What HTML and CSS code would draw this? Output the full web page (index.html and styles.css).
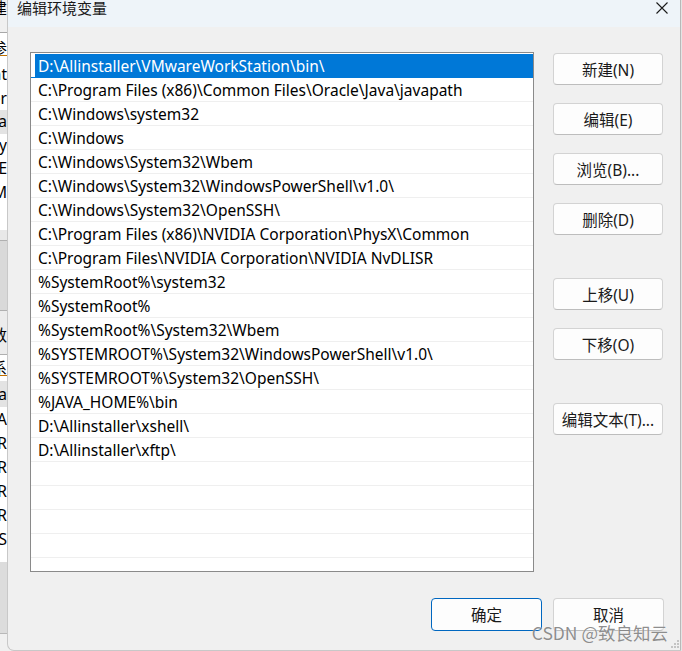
FILE: index.html
```html
<!DOCTYPE html>
<html lang="zh-CN">
<head>
    <meta charset="UTF-8">
    <meta name="viewport" content="width=device-width, initial-scale=1.0">
    <title>编辑环境变量</title>
    <link rel="stylesheet" href="styles.css">
</head>
<body>
    <div class="screen">
        <!-- window behind the dialog, only a sliver visible -->
        <div class="behind">
            <div class="bh-head"><span>建</span></div>
            <div class="bh-list">
                <div class="bh-row bh-first"><span class="ul">参</span></div>
                <div class="bh-row"><span>nt</span></div>
                <div class="bh-row"><span>er</span></div>
                <div class="bh-row bh-sel"><span>a</span></div>
                <div class="bh-row"><span>y</span></div>
                <div class="bh-row"><span>E</span></div>
                <div class="bh-row"><span>M</span></div>
            </div>
            <div class="bh-light"></div>
            <div class="bh-gray"></div>
            <div class="bh-head2"><span>数</span></div>
            <div class="bh-list2">
                <div class="bh-row2 bh-tall"><span class="ul">系</span></div>
                <div class="bh-row2 bh-tall bh-sel"><span>a</span></div>
                <div class="bh-row2"><span>A</span></div>
                <div class="bh-row2"><span>R</span></div>
                <div class="bh-row2"><span>R</span></div>
                <div class="bh-row2"><span>R</span></div>
                <div class="bh-row2"><span>R</span></div>
                <div class="bh-row2"><span>S</span></div>
            </div>
            <div class="bh-gray2"></div>
        </div>

        <div class="dialog">
            <div class="titlebar">
                <span class="title">编辑环境变量</span>
                <svg class="close" width="12" height="12" viewBox="0 0 12 12">
                    <path d="M0.5 0.5 L11.5 11.5 M11.5 0.5 L0.5 11.5" stroke="#1a1a1a" stroke-width="1.1" fill="none"/>
                </svg>
            </div>

            <div class="content">
                <div class="main">
                    <ul class="pathlist">
                        <li class="selected">D:\Allinstaller\VMwareWorkStation\bin\</li>
                        <li>C:\Program Files (x86)\Common Files\Oracle\Java\javapath</li>
                        <li>C:\Windows\system32</li>
                        <li>C:\Windows</li>
                        <li>C:\Windows\System32\Wbem</li>
                        <li>C:\Windows\System32\WindowsPowerShell\v1.0\</li>
                        <li>C:\Windows\System32\OpenSSH\</li>
                        <li>C:\Program Files (x86)\NVIDIA Corporation\PhysX\Common</li>
                        <li>C:\Program Files\NVIDIA Corporation\NVIDIA NvDLISR</li>
                        <li>%SystemRoot%\system32</li>
                        <li>%SystemRoot%</li>
                        <li>%SystemRoot%\System32\Wbem</li>
                        <li>%SYSTEMROOT%\System32\WindowsPowerShell\v1.0\</li>
                        <li>%SYSTEMROOT%\System32\OpenSSH\</li>
                        <li>%JAVA_HOME%\bin</li>
                        <li>D:\Allinstaller\xshell\</li>
                        <li>D:\Allinstaller\xftp\</li>
                        <li></li>
                        <li></li>
                        <li></li>
                        <li></li>
                        <li></li>
                    </ul>

                    <div class="side">
                        <div class="group">
                            <button class="btn">新建(N)</button>
                            <button class="btn">编辑(E)</button>
                            <button class="btn">浏览(B)...</button>
                            <button class="btn">删除(D)</button>
                        </div>
                        <div class="group">
                            <button class="btn">上移(U)</button>
                            <button class="btn">下移(O)</button>
                        </div>
                        <div class="group">
                            <button class="btn">编辑文本(T)...</button>
                        </div>
                    </div>
                </div>

                <div class="footer">
                    <button class="btn btn-wide btn-default">确定</button>
                    <button class="btn btn-wide">取消</button>
                </div>
            </div>

            <div class="watermark">CSDN @致良知云</div>
            <svg class="grip" width="12" height="10" viewBox="0 0 12 10">
                <rect x="9" y="0" width="2" height="2" fill="#c4c4c4"/>
                <rect x="6" y="3" width="2" height="2" fill="#c4c4c4"/>
                <rect x="9" y="3" width="2" height="2" fill="#c4c4c4"/>
                <rect x="3" y="6" width="2" height="2" fill="#c4c4c4"/>
                <rect x="6" y="6" width="2" height="2" fill="#c4c4c4"/>
                <rect x="9" y="6" width="2" height="2" fill="#c4c4c4"/>
            </svg>
        </div>
        <div class="edge"></div>
    </div>
</body>
</html>
```

FILE: styles.css
```css
html, body {
    margin: 0;
    padding: 0;
}
body {
    width: 682px;
    height: 651px;
    overflow: hidden;
    background: #f0f0f0;
    font-family: "Noto Sans", "Noto Sans CJK SC", sans-serif;
    font-size: 15.5px;
    color: #000;
}
.screen {
    display: flex;
    height: 651px;
}

/* sliver of the window behind */
.behind {
    width: 7px;
    flex: none;
    display: flex;
    flex-direction: column;
    overflow: hidden;
    background: #f0f0f0;
}
.behind span {
    white-space: nowrap;
}
.bh-head {
    height: 32px;
    border-bottom: 1px solid #a8a8a8;
    background: #f0f0f0;
    display: flex;
    justify-content: flex-end;
    line-height: 17px;
}
.bh-list {
    height: 197px;
    background: #fff;
}
.bh-row, .bh-row2 {
    height: 23.5px;
    line-height: 23.5px;
    display: flex;
    justify-content: flex-end;
}
.bh-first {
    height: 30px;
    line-height: 30px;
}
.bh-sel {
    background: #e3e3e3;
}
.ul {
    text-decoration: underline;
    text-decoration-color: #c07000;
}
.bh-light {
    height: 10px;
    background: #e8e8e8;
    border-bottom: 1px solid #b0b0b0;
}
.bh-gray {
    height: 69px;
    background: #d9d9d9;
    border-bottom: 1px solid #b0b0b0;
}
.bh-head2 {
    height: 43px;
    line-height: 48px;
    background: #ececec;
    border-bottom: 1px solid #b0b0b0;
    display: flex;
    justify-content: flex-end;
}
.bh-list2 {
    height: 207px;
    background: #fff;
}
.bh-row2 {
    height: 24px;
    line-height: 24px;
}
.bh-tall {
    height: 26px;
    line-height: 26px;
}
.bh-gray2 {
    height: 71px;
    background: #dcdcdc;
    border-bottom: 1px solid #b8b8b8;
}

/* dialog */
.dialog {
    position: relative;
    width: 674px;
    flex: none;
    box-sizing: border-box;
    display: flex;
    flex-direction: column;
    background: #f0f0f0;
    border-left: 1px solid #c8c8c8;
    border-right: 1px solid #b8b8b8;
    border-bottom: 1px solid #c8c8c8;
    border-bottom-left-radius: 7px;
}
.edge {
    width: 1px;
    flex: none;
    background: #e4e4e4;
}
.titlebar {
    height: 27px;
    flex: none;
    background: #eef4f9;
    display: flex;
    justify-content: space-between;
    align-items: flex-start;
    padding: 0 12px 0 9px;
}
.title {
    font-family: "Noto Sans CJK SC", sans-serif;
    font-size: 15px;
    line-height: 16px;
    color: #1a1a1a;
}
.close {
    margin-top: 2px;
}
.content {
    flex: 1;
    padding: 25px 15px 0 22px;
}
.main {
    display: flex;
    gap: 19px;
}
.pathlist {
    width: 504px;
    height: 520px;
    box-sizing: border-box;
    margin: 0;
    padding: 1px 0 0 0;
    list-style: none;
    overflow: hidden;
    background: #fff;
    border: 1px solid #8a8a8a;
}
.pathlist li {
    height: 24px;
    box-sizing: border-box;
    padding-left: 7px;
    line-height: 25px;
    white-space: nowrap;
    border-bottom: 1px solid #efefef;
}
.pathlist li.selected {
    color: #fff;
    background: linear-gradient(90deg, #fff 4px, #0078d7 4px);
    border-bottom-color: #0078d7;
}
.side {
    width: 110px;
    padding-top: 1px;
    display: flex;
    flex-direction: column;
    gap: 43px;
}
.group {
    display: flex;
    flex-direction: column;
    gap: 18px;
}
.btn {
    height: 32px;
    box-sizing: border-box;
    padding: 0;
    border: 1px solid #d3d3d3;
    border-bottom-color: #bdbdbd;
    border-radius: 4px;
    background: #fdfdfd;
    font-family: "Noto Sans", "Noto Sans CJK SC", sans-serif;
    font-size: 15.5px;
    color: #1a1a1a;
}
.footer {
    display: flex;
    justify-content: flex-end;
    gap: 11px;
    margin-top: 26px;
    margin-right: 1px;
}
.btn-wide {
    width: 111px;
    height: 33px;
}
.btn-default {
    border: 1px solid #0067c0;
}
.watermark {
    position: absolute;
    right: 12px;
    bottom: 7px;
    font-family: "Noto Sans CJK SC", sans-serif;
    font-size: 17.5px;
    line-height: 20px;
    color: rgba(105, 105, 105, 0.75);
    text-shadow: 0 0 1px rgba(255, 255, 255, 0.8);
}
.grip {
    position: absolute;
    right: 0;
    bottom: 0;
}
```
